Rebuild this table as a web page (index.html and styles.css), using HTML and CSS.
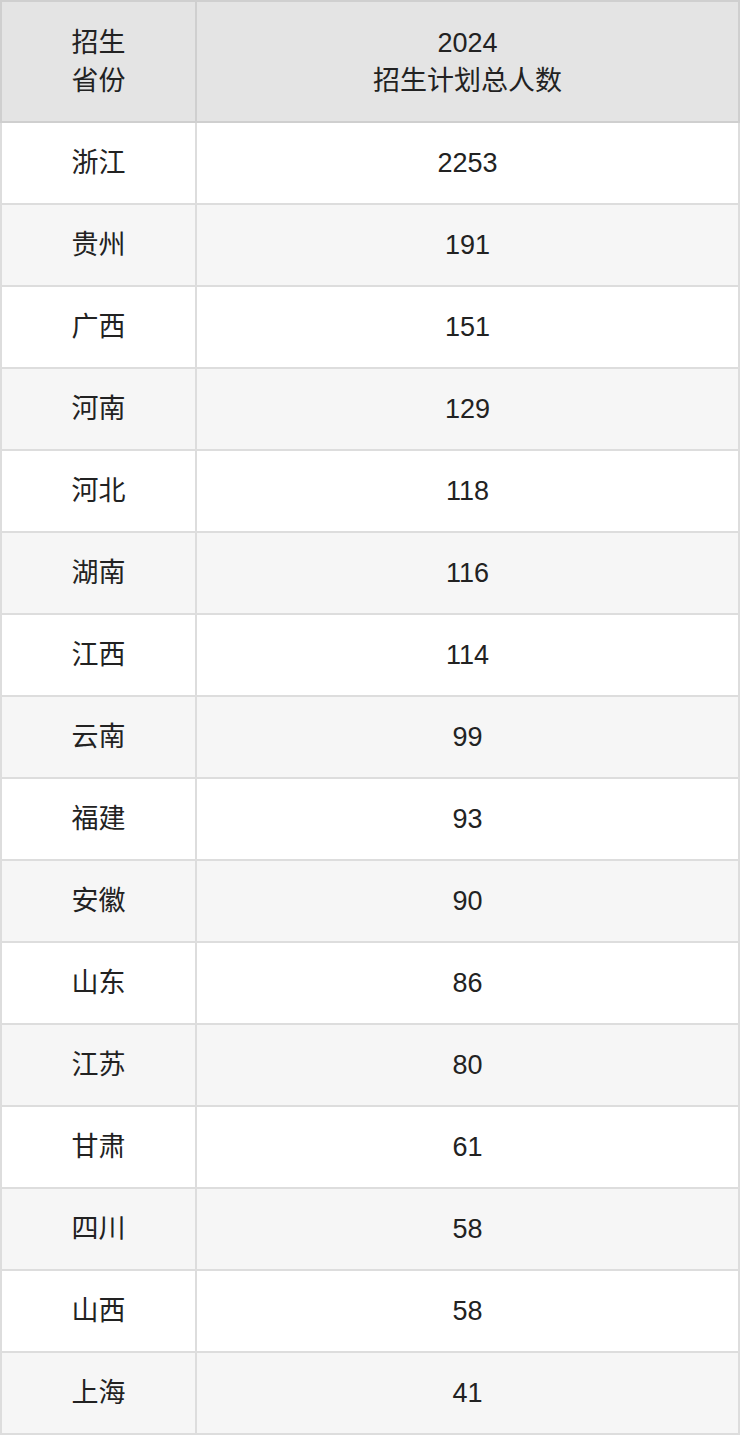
FILE: index.html
```html
<!DOCTYPE html>
<html lang="zh">
<head>
<meta charset="utf-8">
<link rel="stylesheet" href="styles.css">
</head>
<body>
<table class="plan">
  <thead>
    <tr>
      <th class="col-prov">招生<br>省份</th>
      <th class="col-num">2024<br>招生计划总人数</th>
    </tr>
  </thead>
  <tbody>
    <tr><td>浙江</td><td>2253</td></tr>
    <tr><td>贵州</td><td>191</td></tr>
    <tr><td>广西</td><td>151</td></tr>
    <tr><td>河南</td><td>129</td></tr>
    <tr><td>河北</td><td>118</td></tr>
    <tr><td>湖南</td><td>116</td></tr>
    <tr><td>江西</td><td>114</td></tr>
    <tr><td>云南</td><td>99</td></tr>
    <tr><td>福建</td><td>93</td></tr>
    <tr><td>安徽</td><td>90</td></tr>
    <tr><td>山东</td><td>86</td></tr>
    <tr><td>江苏</td><td>80</td></tr>
    <tr><td>甘肃</td><td>61</td></tr>
    <tr><td>四川</td><td>58</td></tr>
    <tr><td>山西</td><td>58</td></tr>
    <tr><td>上海</td><td>41</td></tr>
  </tbody>
</table>
</body>
</html>
```
FILE: styles.css
```css
html, body {
  margin: 0;
  padding: 0;
  background: #ffffff;
}
.plan {
  width: 740px;
  border-collapse: collapse;
  font-family: "Liberation Sans", "Noto Sans CJK SC", sans-serif;
  font-size: 27px;
  color: #222222;
  table-layout: fixed;
}
.plan th, .plan td {
  text-align: center;
  vertical-align: middle;
  padding: 0;
}
.plan th {
  background: #e4e4e4;
  border: 2px solid #cfcfcf;
  font-weight: normal;
  line-height: 38px;
  height: 119px;
}
.plan td {
  border: 2px solid #dddddd;
  height: 80px;
  line-height: 32px;
}
.plan .col-prov {
  width: 193px;
}
.plan tbody tr:nth-child(even) td {
  background: #f6f6f6;
}
```
